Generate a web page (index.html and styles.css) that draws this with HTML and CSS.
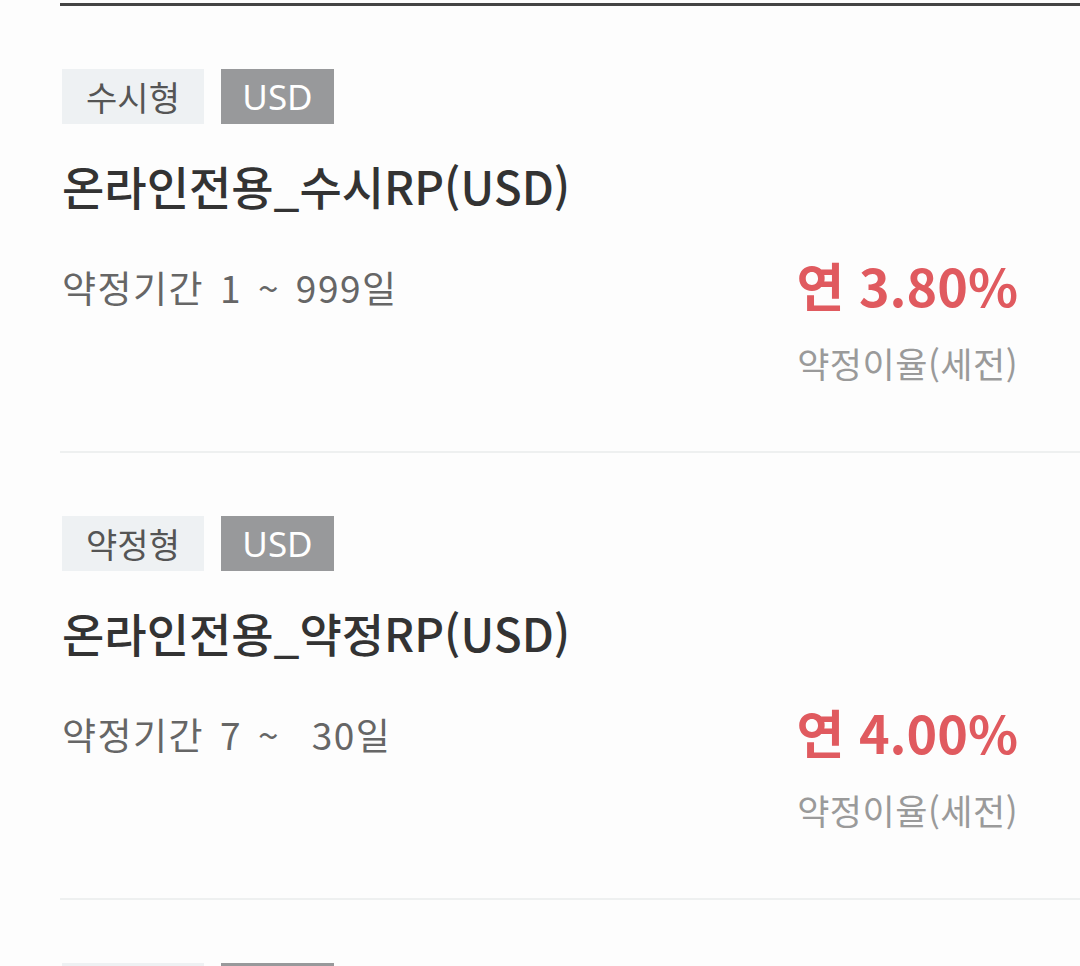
FILE: index.html
```html
<!DOCTYPE html>
<html lang="ko">
<head>
<meta charset="utf-8">
<link rel="stylesheet" href="styles.css">
</head>
<body>
<div class="list">
  <div class="item">
    <div class="tags">
      <span class="tag tag-type">수시형</span>
      <span class="tag tag-cur">USD</span>
    </div>
    <div class="title">온라인전용_수시RP(USD)</div>
    <div class="row">
      <div class="period">약정기간 1 ~ 999일</div>
      <div class="rate-box">
        <div class="rate">연 3.80%</div>
        <div class="rate-label">약정이율(세전)</div>
      </div>
    </div>
  </div>
  <div class="item">
    <div class="tags">
      <span class="tag tag-type">약정형</span>
      <span class="tag tag-cur">USD</span>
    </div>
    <div class="title">온라인전용_약정RP(USD)</div>
    <div class="row">
      <div class="period">약정기간 7 ~ &nbsp;30일</div>
      <div class="rate-box">
        <div class="rate">연 4.00%</div>
        <div class="rate-label">약정이율(세전)</div>
      </div>
    </div>
  </div>
  <div class="item">
    <div class="tags">
      <span class="tag tag-type">약정형</span>
      <span class="tag tag-cur">USD</span>
    </div>
  </div>
</div>
</body>
</html>
```
FILE: styles.css
```css
html, body {
  margin: 0;
  padding: 0;
  background: #fdfdfd;
  font-family: "Noto Sans CJK KR", "Noto Sans", sans-serif;
  overflow: hidden;
}
.list {
  margin-left: 60px;
  margin-top: 3px;
  border-top: 3px solid #444;
}
.item {
  padding: 63px 62px 66px 2px;
  border-bottom: 2px solid #eef0f0;
}
.tags {
  display: flex;
  gap: 17px;
}
.tag {
  display: flex;
  align-items: center;
  justify-content: center;
  height: 55px;
  font-size: 34px;
}
.tag-type {
  width: 142px;
  background: #eef1f3;
  color: #555;
}
.tag-cur {
  width: 113px;
  background: #98999b;
  color: #fff;
  font-family: "Noto Sans", sans-serif;
  font-size: 35px;
}
.title {
  margin-top: 33px;
  font-size: 46px;
  line-height: 56px;
  font-weight: 500;
  color: #333;
}
.row {
  display: flex;
  justify-content: space-between;
  align-items: flex-start;
  margin-top: 47px;
}
.period {
  font-size: 37px;
  line-height: 54px;
  color: #666;
  letter-spacing: 1.5px;
  word-spacing: 4px;
}
.rate-box {
  display: flex;
  flex-direction: column;
  align-items: flex-end;
}
.rate {
  font-size: 52px;
  line-height: 50px;
  font-weight: 700;
  color: #e05a5f;
}
.rate-label {
  margin-top: 31px;
  font-size: 35px;
  line-height: 44px;
  color: #9a9a9a;
  letter-spacing: 0.5px;
}
```
